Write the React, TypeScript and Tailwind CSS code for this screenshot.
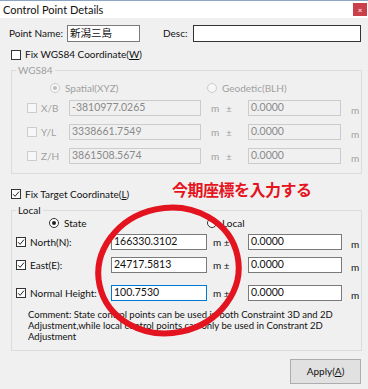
import React from 'react';

const font = { fontFamily: 'Lato, "Noto Sans CJK JP", sans-serif' };

const CheckBox = ({ checked = false, disabled = false }: { checked?: boolean; disabled?: boolean }) => (
  <span
    className={`flex-none w-[10px] h-[10px] border flex items-center justify-center ${
      disabled ? 'border-[#cccccc] bg-[#f7f7f7]' : 'border-[#333333] bg-white'
    }`}
  >
    {checked && (
      <svg width="8" height="8" viewBox="0 0 8 8">
        <path d="M1 4.2 L3.1 6.3 L7 1.6" fill="none" stroke="#222" strokeWidth="1" />
      </svg>
    )}
  </span>
);

const Radio = ({ checked = false, disabled = false }: { checked?: boolean; disabled?: boolean }) => (
  <span
    className={`flex-none w-[10px] h-[10px] rounded-full border flex items-center justify-center ${
      disabled ? 'border-[#cccccc] bg-[#f7f7f7]' : 'border-[#333333] bg-white'
    }`}
  >
    {checked && <span className={`w-[4px] h-[4px] rounded-full ${disabled ? 'bg-[#bcbcbc]' : 'bg-[#222]'}`} />}
  </span>
);

const Field = ({ value, w, disabled = false, active = false }: { value: string; w: string; disabled?: boolean; active?: boolean }) => (
  <div
    className={`flex-none h-[16px] border flex items-center pl-[2px] text-[10.5px] ${w} ${
      disabled
        ? 'border-[#cccccc] bg-[#f0f0f0] text-[#8a8a8a]'
        : active
        ? 'border-[#0078d7] bg-white text-[#111]'
        : 'border-[#7a7a7a] bg-white text-[#111]'
    }`}
  >
    {value}
  </div>
);

const WgsRow = ({ label, value }: { label: string; value: string }) => (
  <div className="flex items-center h-[16px] text-[10px] text-[#a0a0a0]">
    <span className="ml-[15px]">
      <CheckBox disabled />
    </span>
    <span className="w-[32px] pl-[4px] flex-none">{label}</span>
    <Field value={value} w="w-[132px]" disabled />
    <span className="ml-[10px] w-[15px] flex-none">m</span>
    <span className="w-[22px] flex-none">±</span>
    <Field value="0.0000" w="w-[93px]" disabled />
    <span className="ml-[10px] mt-[4px]">m</span>
  </div>
);

const LocalRow = ({ label, value, active = false }: { label: string; value: string; active?: boolean }) => (
  <div className="flex items-center h-[16px] text-[10px] text-[#111]">
    <span className="ml-[4px]">
      <CheckBox checked />
    </span>
    <span className="w-[85px] pl-[4px] flex-none">{label}</span>
    <Field value={value} w="w-[96px]" active={active} />
    <span className="ml-[6px] w-[35px] flex-none">m ±</span>
    <Field value="0.0000" w="w-[94px]" />
    <span className="ml-[9px] mt-[4px]">m</span>
  </div>
);

const App = () => {
  return (
    <div className="relative w-[368px] h-[389px] bg-[#f0f0f0] overflow-hidden border-t border-[#8aa6c4]" style={font}>
      {/* title bar */}
      <div className="h-[17px] bg-white flex items-center justify-between pl-[3px] pr-[1px]">
        <span className="text-[11px] text-[#111] leading-none">Control Point Details</span>
        <div className="w-[14px] h-[13px] bg-[#c9404a] flex items-center justify-center text-white text-[8px] leading-none">
          ×
        </div>
      </div>

      {/* name row */}
      <div className="flex items-center h-[17px] mt-[7px] text-[10px] text-[#111]">
        <span className="ml-[9px] w-[58px] flex-none">Point Name:</span>
        <div className="w-[73px] h-[17px] border border-[#7a7a7a] bg-white flex items-center pl-[2px] text-[10.5px]">新潟三島</div>
        <span className="ml-[23px] w-[30px] flex-none">Desc:</span>
        <div className="w-[168px] h-[17px] border-[1.5px] border-[#333] bg-white" />
      </div>

      {/* fix wgs84 */}
      <div className="flex items-center h-[13px] mt-[6px] text-[10px] text-[#111]">
        <span className="ml-[11px]">
          <CheckBox />
        </span>
        <span className="ml-[4px]">
          Fix WGS84 Coordinate(<span className="underline">W</span>)
        </span>
      </div>

      <fieldset className="ml-[11px] mt-[3px] w-[351px] h-[110px] border border-[#dcdcdc] pb-[9px]">
        <legend className="ml-[4px] px-[2px] text-[10px] leading-[12px] text-[#a0a0a0]">WGS84</legend>
        <div className="flex items-center h-[12px] mt-[6px] text-[10px] text-[#a0a0a0]">
          <span className="ml-[38px]">
            <Radio checked disabled />
          </span>
          <span className="ml-[5px] w-[142px] flex-none">Spatial(XYZ)</span>
          <Radio disabled />
          <span className="ml-[5px]">Geodetic(BLH)</span>
        </div>
        <div className="mt-[6px] flex flex-col gap-[8px]">
          <WgsRow label="X/B" value="-3810977.0265" />
          <WgsRow label="Y/L" value="3338661.7549" />
          <WgsRow label="Z/H" value="3861508.5674" />
        </div>
      </fieldset>

      {/* fix target */}
      <div className="flex items-center h-[14px] mt-[13px] text-[10px] text-[#111]">
        <span className="ml-[11px]">
          <CheckBox checked />
        </span>
        <span className="ml-[4px]">
          Fix Target Coordinate(<span className="underline">L</span>)
        </span>
      </div>

      <fieldset className="ml-[11px] mt-[3px] w-[351px] h-[147px] border border-[#dcdcdc]">
        <legend className="ml-[4px] px-[2px] text-[10px] leading-[12px] text-[#111]">Local</legend>
        <div className="flex items-center h-[12px] mt-[1px] text-[10px] text-[#111]">
          <span className="ml-[37px]">
            <Radio checked />
          </span>
          <span className="ml-[5px] w-[143px] flex-none">State</span>
          <Radio />
          <span className="ml-[5px]">Local</span>
        </div>
        <div className="mt-[5px]">
          <LocalRow label="North(N):" value="166330.3102" />
        </div>
        <div className="mt-[7px]">
          <LocalRow label="East(E):" value="24717.5813" />
        </div>
        <div className="mt-[12px]">
          <LocalRow label="Normal Height:" value="100.7530" active />
        </div>
        <p className="mt-[8px] ml-[16px] text-[9.5px] leading-[11px] text-[#111] whitespace-nowrap">
          Comment: State control points can be used in both Constraint 3D and 2D
          <br />
          Adjustment,while local control points can only be used in Constrant 2D
          <br />
          Adjustment
        </p>
      </fieldset>

      <div className="flex justify-end pr-[7px] mt-[8px]">
        <button className="w-[71px] h-[25px] bg-[#e1e1e1] border border-[#adadad] text-[10px] text-[#111]">
          Apply(<span className="underline">A</span>)
        </button>
      </div>

      {/* red annotation: handwritten note and circle drawn over the dialog */}
      <span className="absolute left-[172px] top-[181px] text-[16px] font-bold text-[#e5141e] leading-none tracking-[-0.5px] whitespace-nowrap">
        今期座標を入力する
      </span>
      <svg className="absolute left-0 top-0 pointer-events-none" width="368" height="389">
        <ellipse cx="168.5" cy="269.5" rx="70.5" ry="62.5" fill="none" stroke="#e3141f" strokeWidth="6" transform="rotate(-12 168.5 269.5)" />
      </svg>
    </div>
  );
};

export default App;
